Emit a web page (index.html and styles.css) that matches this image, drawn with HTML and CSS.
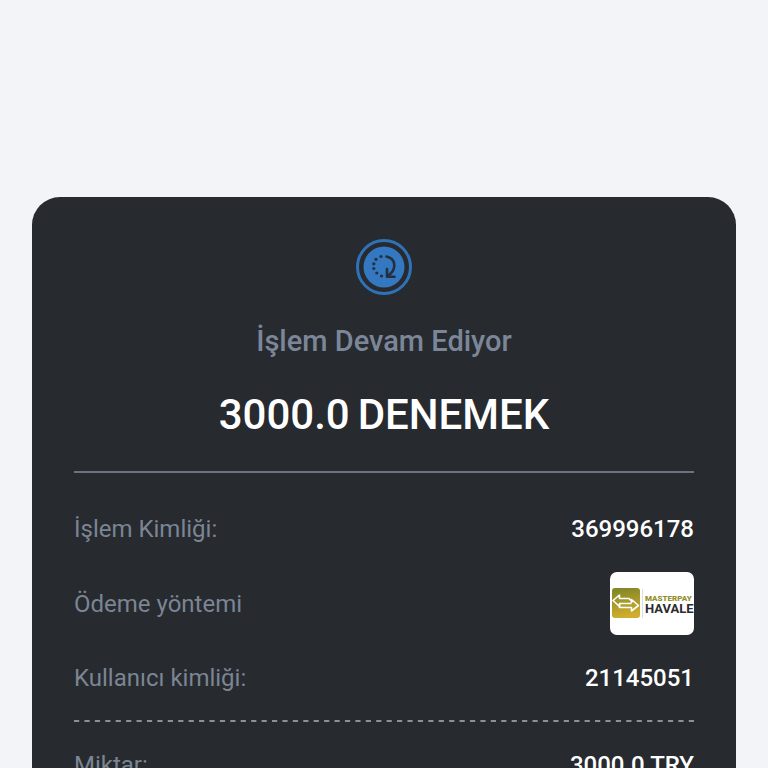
FILE: index.html
```html
<!DOCTYPE html>
<html lang="tr">
<head>
<meta charset="utf-8">
<meta name="viewport" content="width=device-width, initial-scale=1">
<title>İşlem Devam Ediyor</title>
<link rel="stylesheet" href="styles.css">
</head>
<body>
<main class="card">
  <header class="summary">
    <svg class="status-icon" viewBox="0 0 56 56" aria-hidden="true">
      <circle cx="28" cy="28" r="26.5" fill="none" stroke="#2f72b8" stroke-width="3"/>
      <circle cx="28" cy="28" r="20.5" fill="#3478c2"/>
      <path d="M30.500 17.500C39.500 19.500 41.500 29.500 32.500 36.500" fill="none" stroke="#24303d" stroke-width="2.600" stroke-linecap="round"/>
      <path d="M31 30V37.800H38.500" fill="none" stroke="#24303d" stroke-width="2.600" stroke-linecap="round" stroke-linejoin="round"/>
      <g fill="#24303d">
        <circle cx="25" cy="17.500" r="1.600"/>
        <circle cx="20" cy="20.300" r="1.600"/>
        <circle cx="17.800" cy="24.800" r="1.600"/>
        <circle cx="17.800" cy="29.500" r="1.600"/>
        <circle cx="20.800" cy="34" r="1.600"/>
        <circle cx="25.500" cy="37" r="1.600"/>
      </g>
    </svg>
    <h1 class="status">İşlem Devam Ediyor</h1>
    <p class="amount"><span>3000.0</span> <span>DENEMEK</span></p>
  </header>
  <hr class="divider">
  <dl class="details">
    <div class="row"><dt>İşlem Kimliği:</dt><dd>369996178</dd></div>
    <div class="row">
      <dt>Ödeme yöntemi</dt>
      <dd>
        <svg class="method" viewBox="0 0 84 63" role="img" aria-label="Masterpay Havale">
          <defs>
            <linearGradient id="gold" x1="0" y1="0" x2="0.200" y2="1">
              <stop offset="0" stop-color="#7b8428"/>
              <stop offset="1" stop-color="#d0ad2c"/>
            </linearGradient>
          </defs>
          <rect x="2" y="16" width="28" height="30" rx="3" fill="url(#gold)"/>
          <path d="M21.500 31.500H9.500V34.500L3 28.500L9.500 23V26.500H19L21.500 29" fill="none" stroke="#fff" stroke-width="1.600" stroke-linejoin="round"/>
          <path d="M9.500 32V35.500H21.500V39L28.500 33.500L21.500 27.500V31" fill="none" stroke="#fff" stroke-width="1.600" stroke-linejoin="round"/>
          <path d="M32.500 17V46" stroke="#ddd" stroke-width="1"/>
          <text class="brand" x="35" y="29">MASTERPAY</text>
          <text class="brand-sub" x="35" y="41">HAVALE</text>
        </svg>
      </dd>
    </div>
    <div class="row"><dt>Kullanıcı kimliği:</dt><dd>21145051</dd></div>
  </dl>
  <svg class="dashes" aria-hidden="true">
    <line x1="0" y1="1" x2="100%" y2="1" pathLength="119"/>
  </svg>
  <dl class="details">
    <div class="row"><dt>Miktar:</dt><dd>3000.0 TRY</dd></div>
  </dl>
</main>
</body>
</html>
```

FILE: styles.css
```css
* {
  box-sizing: border-box;
}

body {
  margin: 0;
  height: 100vh;
  overflow: hidden;
  padding: 197px 32px 0;
  background: #f2f4f7;
  font-family: Roboto, "Liberation Sans", sans-serif;
}

.card {
  display: flex;
  flex-direction: column;
  gap: 26px;
  padding: 42px;
  border-radius: 28px 28px 0 0;
  background: #272a2f;
  color: #fff;
}

.summary {
  display: flex;
  flex-direction: column;
  align-items: center;
  gap: 28px;
}

.status-icon {
  width: 56px;
  height: 56px;
}

.status {
  margin: 0;
  font-size: 29px;
  line-height: 36px;
  font-weight: 500;
  color: #7b8799;
}

.amount {
  display: flex;
  gap: 8px;
  margin: 0;
  font-size: 42px;
  line-height: 56px;
  font-weight: 500;
}

.divider {
  width: 100%;
  height: 2px;
  margin: 2px 0 14px;
  border: 0;
  background: #6c7180;
}

.details {
  display: flex;
  flex-direction: column;
  gap: 27px;
  margin: 0;
}

.row {
  display: flex;
  justify-content: space-between;
  align-items: center;
  font-size: 24px;
  line-height: 32px;
}

.row dt {
  color: #7b8593;
}

.row dd {
  margin: 0;
  font-weight: 500;
}

.method {
  display: block;
  width: 84px;
  height: 63px;
  border-radius: 7px;
  background: #fff;
}

.brand,
.brand-sub {
  font-family: Roboto, sans-serif;
}

.brand {
  font-size: 8px;
  font-weight: 900;
  fill: #93902c;
}

.brand-sub {
  font-size: 13px;
  font-weight: 700;
  fill: #2c2c2c;
}

.dashes {
  width: 100%;
  height: 2px;
  margin-bottom: 1px;
}

.dashes line {
  stroke: #8d9096;
  stroke-width: 2px;
  stroke-dasharray: 1;
}
```
